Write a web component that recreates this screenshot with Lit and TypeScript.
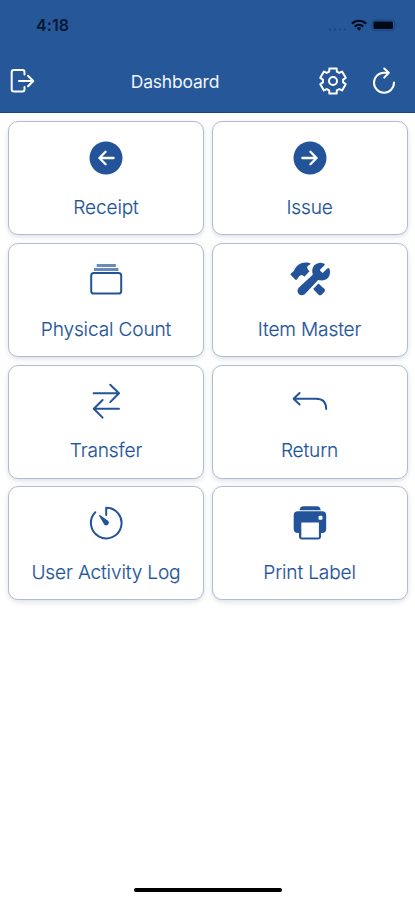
import { LitElement, html, css, svg } from "lit";
import { customElement } from "lit/decorators.js";

const gearPath = (): string => {
  const pts: string[] = [];
  for (let i = 0; i < 6; i++) {
    const base = i * 60 - 90;
    for (const [off, r] of [[-22, 10.2], [-16, 13.1], [16, 13.1], [22, 10.2]]) {
      const a = ((base + off) * Math.PI) / 180;
      pts.push(`${(15 + r * Math.cos(a)).toFixed(2)} ${(15 + r * Math.sin(a)).toFixed(2)}`);
    }
  }
  return `M${pts.join("L")}Z`;
};

const icons = {
  receipt: svg`<circle cx="20" cy="20" r="16.5" fill="currentColor"/><path class="w" d="M27.6 20H13.6M19.6 13.8L13.4 20l6.2 6.2"/>`,
  issue: svg`<circle cx="20" cy="20" r="16.5" fill="currentColor"/><path class="w" d="M12.4 20h14M20.4 13.8l6.2 6.2-6.2 6.2"/>`,
  count: svg`<rect class="s" x="5.2" y="13.9" width="30" height="20.6" rx="2.6"/><path d="M8 10.4h24.4M10.7 6.4h19.2" stroke="currentColor" stroke-width="3" opacity=".68"/>`,
  tools: svg`<g transform="scale(.078125)" fill="currentColor"><path d="M503.58 126.2a16.85 16.85 0 00-27.07-4.55l-51.15 51.15a11.15 11.15 0 01-15.66 0l-22.48-22.48a11.17 11.17 0 010-15.67l50.88-50.89a16.85 16.85 0 00-5.27-27.4c-39.71-17-89.08-7.45-120 23.29-26.81 26.61-34.83 68-22 113.7a11 11 0 01-3.16 11.1L114.77 365.1a56.76 56.76 0 1080.14 80.18L357 272.08a11 11 0 0110.9-3.17c45 12 86 4 112.43-22 15.2-15 25.81-36.17 29.89-59.71 3.83-22.2 1.41-44.44-6.64-61z"/><path d="M437 378c-14-12-44-38-74-66l-66 71c28 30 54 58 65 70a31 31 0 0045 1l33-33a31 31 0 00-3-43z"/><path d="M10 190L50 150C60 140 62 120 80 100C120 55 180 35 250 50C264 54 264 66 252 72C225 85 215 97 222 118C226 132 234 142 250 158L184 226C172 212 160 205 148 205C135 206 128 212 118 222L88 262Q76 274 66 262L10 206Q2 198 10 190Z"/></g>`,
  transfer: svg`<path class="s" d="M7.6 12.3h25M24.2 3.7l8.8 8.6-8.8 8.8M33 27.8H8M16.6 19l-8.8 8.8 8.8 8.8"/>`,
  back: svg`<path class="s" d="M3.8 17.7H26Q36.2 17.7 36.2 28M9.6 12l-6 5.7 6 5.8"/>`,
  timer: svg`<path class="s" d="M20.2 12V4.7A15.3 15.3 0 1 1 9.3 9.3"/><path d="M12.9 12.5q.3-.8 1.1-.5l8 5.8a2.6 2.6 0 0 1-3.8 3.8z" fill="currentColor"/>`,
  print: svg`<g fill="currentColor"><path d="M9.6 7.2q0-4 4-4h13q4 0 4 4z"/><path d="M8 8.2h24q4.2 0 4.2 4.2V26q0 4-4.2 4h-1v3.5q0 3-3 3H12q-3 0-3-3V30H8q-4.3 0-4.3-4V12.4q0-4.2 4.3-4.2z"/></g><path d="M11.3 19.5h17.6v15H11.3z" fill="#fff"/><rect x="28.5" y="12.7" width="4" height="4" rx="1.2" fill="#fff"/>`,
};

const tiles: [string, unknown][] = [
  ["Receipt", icons.receipt],
  ["Issue", icons.issue],
  ["Physical Count", icons.count],
  ["Item Master", icons.tools],
  ["Transfer", icons.transfer],
  ["Return", icons.back],
  ["User Activity Log", icons.timer],
  ["Print Label", icons.print],
];

@customElement("app-root")
class AppRoot extends LitElement {
  static styles = css`
    :host { display: flex; flex-direction: column; height: 900px; background: #fff; font-family: Inter, "Liberation Sans", sans-serif; overflow: hidden; }
    * { box-sizing: border-box; }
    svg { display: block; flex: none; }
    .top { height: 113px; background: #255799; border-bottom: 1px solid #174684; display: flex; flex-direction: column; flex: none; }
    .status { height: 50px; display: flex; justify-content: space-between; padding: 0 16px 0 36px; align-items: center; color: #071833; }
    .time { font-size: 16px; font-weight: 600; letter-spacing: 0.1px; line-height: 20px; }
    .nav { height: 62px; display: grid; grid-template-columns: 80px 1fr 97px; align-items: center; color: #fff; }
    .title { font-size: 17.5px; line-height: 22px; letter-spacing: -0.2px; text-align: center; padding: 1px 50px 0 2px; color: #f0f5fc; }
    .out { margin-left: 8px; }
    .actions { display: flex; gap: 21px; }
    .grid { display: grid; grid-template-columns: 1fr 1fr; grid-auto-rows: 114px; gap: 7.6px; padding: 8.4px 7.5px 0 8px; }
    .card { border: 1px solid #b3bbd3; border-radius: 10px; background: #fff; box-shadow: 0 2px 5px rgba(60, 70, 95, 0.17); display: flex; flex-direction: column; align-items: center; padding-top: 15.5px; color: #23549a; }
    .label { margin-top: 16.3px; font-size: 19.1px; line-height: 26px; font-weight: 300; letter-spacing: -0.15px; white-space: nowrap; -webkit-text-stroke: 0.15px currentColor; }
    .s { fill: none; stroke: currentColor; stroke-width: 2; stroke-linecap: round; stroke-linejoin: round; }
    .w { fill: none; stroke: #fff; stroke-width: 2.3; stroke-linecap: round; stroke-linejoin: round; }
    .home { margin: auto auto 8px; width: 148px; height: 4.5px; border-radius: 3px; background: #000; }
  `;

  render() {
    return html`
      <div class="top">
        <div class="status">
          <span class="time">4:18</span>
          <svg width="72" height="16" viewBox="0 0 72 16">
            <g fill="#1b457f"><circle cx="3" cy="12.5" r="1.1"/><circle cx="8" cy="12.5" r="1.1"/><circle cx="13" cy="12.5" r="1.1"/><circle cx="18" cy="12.5" r="1.1"/></g>
            <g fill="none" stroke="#030d1e" stroke-width="2.2"><path d="M24.8 6.6a10.5 10.5 0 0 1 14.4 0M27.7 9.6a6.4 6.4 0 0 1 8.6 0"/></g>
            <path d="M29.8 11.3a3.4 3.4 0 0 1 4.4 0L32 13.8z" fill="#030d1e"/>
            <rect x="45" y="3" width="22.5" height="10.5" rx="3" fill="none" stroke="#1b457f"/>
            <rect x="46.5" y="4.5" width="19.5" height="7.5" rx="1.5" fill="#000916"/>
            <path d="M69 6.5q1.5 1.7 0 3.5z" fill="#1b457f"/>
          </svg>
        </div>
        <div class="nav">
          <svg class="out" width="28" height="28" viewBox="0 0 28 28"><path class="s" d="M16.5 7.5V5q0-2-2-2H6Q3.7 3 3.7 5.3v17q0 2.3 2.3 2.3h8.5q2 0 2-2v-2.5M11 14h14M20 8.7l5.3 5.3-5.3 5.3"/></svg>
          <div class="title">Dashboard</div>
          <div class="actions">
            <svg width="30" height="30" viewBox="0 0 30 30"><path class="s" d=${gearPath()}/><circle class="s" cx="15" cy="15" r="4"/></svg>
            <svg width="30" height="30" viewBox="0 0 30 30"><path class="s" d="M25 16.6A10 10 0 1 1 15 6.7h4.5M15.2 2.5l4.6 4.3-4.6 4.8"/></svg>
          </div>
        </div>
      </div>
      <div class="grid">
        ${tiles.map(
          ([label, icon]) => html`<div class="card">
            <svg width="40" height="40" viewBox="0 0 40 40">${icon}</svg>
            <div class="label">${label}</div>
          </div>`
        )}
      </div>
      <div class="home"></div>
    `;
  }
}
